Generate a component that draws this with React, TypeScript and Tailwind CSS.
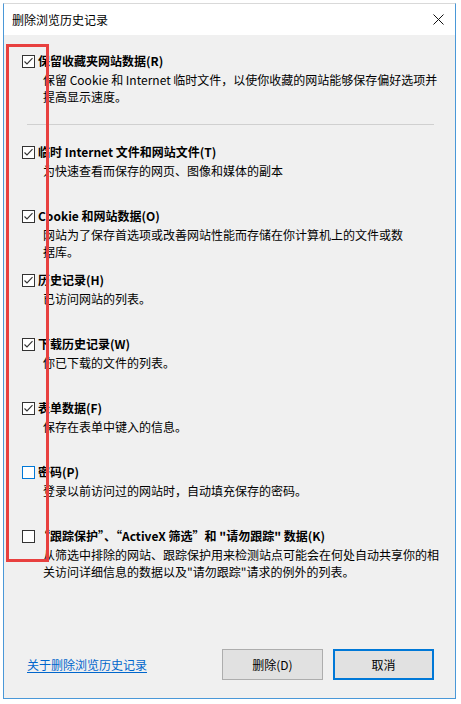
import React from 'react'

type Item = {
  title: string
  lines: string[]
  checked: boolean
  focused?: boolean
}

const items: Item[] = [
  {
    title: '临时 Internet 文件和网站文件(T)',
    lines: ['为快速查看而保存的网页、图像和媒体的副本'],
    checked: true,
  },
  {
    title: 'Cookie 和网站数据(O)',
    lines: ['网站为了保存首选项或改善网站性能而存储在你计算机上的文件或数', '据库。'],
    checked: true,
  },
  { title: '历史记录(H)', lines: ['已访问网站的列表。'], checked: true },
  { title: '下载历史记录(W)', lines: ['你已下载的文件的列表。'], checked: true },
  { title: '表单数据(F)', lines: ['保存在表单中键入的信息。'], checked: true },
  {
    title: '密码(P)',
    lines: ['登录以前访问过的网站时，自动填充保存的密码。'],
    checked: false,
    focused: true,
  },
  {
    title: '“跟踪保护”、“ActiveX 筛选”和 "请勿跟踪" 数据(K)',
    lines: [
      '从筛选中排除的网站、跟踪保护用来检测站点可能会在何处自动共享你的相',
      '关访问详细信息的数据以及"请勿跟踪"请求的例外的列表。',
    ],
    checked: false,
  },
]

function Checkbox({ checked, focused }: { checked: boolean; focused?: boolean }) {
  return (
    <div
      className={`w-[13px] h-[13px] shrink-0 bg-white border ${
        focused ? 'border-[#0078d7]' : 'border-[#333333]'
      }`}
    >
      {checked && (
        <svg width="11" height="11" viewBox="0 0 11 11" className="block">
          <path d="M1.5 5.5 L4 8 L9.5 2.2" fill="none" stroke="#333333" strokeWidth="1.1" />
        </svg>
      )}
    </div>
  )
}

function Option({ item }: { item: Item }) {
  return (
    <div className="flex flex-col">
      <div className="flex items-center h-4 gap-[3px]">
        <Checkbox checked={item.checked} focused={item.focused} />
        <span className="font-bold whitespace-nowrap">{item.title}</span>
      </div>
      <div className="mt-[2px] ml-[21px] leading-[17px]">
        {item.lines.map((line) => (
          <div key={line} className="whitespace-nowrap">
            {line}
          </div>
        ))}
      </div>
    </div>
  )
}

export default function App() {
  return (
    <div
      className="relative w-[461px] h-[704px] bg-white text-[12px] text-black overflow-hidden"
      style={{ fontFamily: '"Noto Sans CJK SC", "Microsoft YaHei", sans-serif' }}
    >
      <div className="ml-[3px] mt-[3px] w-[453px] h-[696px] flex flex-col border-t border-t-[#d9d9d9] border-x border-b border-[#4a98d8]">
        {/* Title bar */}
        <div className="h-[31px] shrink-0 bg-white flex items-center justify-between pl-2 pr-[11px]">
          <span className="leading-none">删除浏览历史记录</span>
          <svg width="11" height="11" viewBox="0 0 11 11">
            <path d="M0.5 0.5 L10.5 10.5 M10.5 0.5 L0.5 10.5" stroke="#111111" strokeWidth="1" />
          </svg>
        </div>

        {/* Body */}
        <div className="flex-1 bg-[#f0f0f0] flex flex-col pt-[18px] pl-[18px]">
          <Option
            item={{
              title: '保留收藏夹网站数据(R)',
              lines: ['保留 Cookie 和 Internet 临时文件，以使你收藏的网站能够保存偏好选项并', '提高显示速度。'],
              checked: true,
            }}
          />
          <div className="mt-[19px] mb-[19px] ml-[5px] w-[407px] h-px bg-[#d0d0d0]" />
          {items.map((item) => (
            <div key={item.title} className="h-16">
              <Option item={item} />
            </div>
          ))}

          {/* Footer */}
          <div className="mt-auto mb-[18px] flex items-center pl-[5px] pr-[21px]">
            <a className="text-[#0066cc] underline underline-offset-2 cursor-pointer">关于删除浏览历史记录</a>
            <div className="ml-auto flex gap-[10px]">
              <button className="w-[101px] h-[31px] bg-[#e1e1e1] border border-[#adadad]">删除(D)</button>
              <button className="w-[101px] h-[31px] bg-[#e1e1e1] border-2 border-[#0078d7]">取消</button>
            </div>
          </div>
        </div>
      </div>

      {/* Red highlight over the checkbox column */}
      <div className="absolute left-[6px] top-[44px] w-[43px] h-[518px] border-[3px] border-[#e8403f]" />
    </div>
  )
}
